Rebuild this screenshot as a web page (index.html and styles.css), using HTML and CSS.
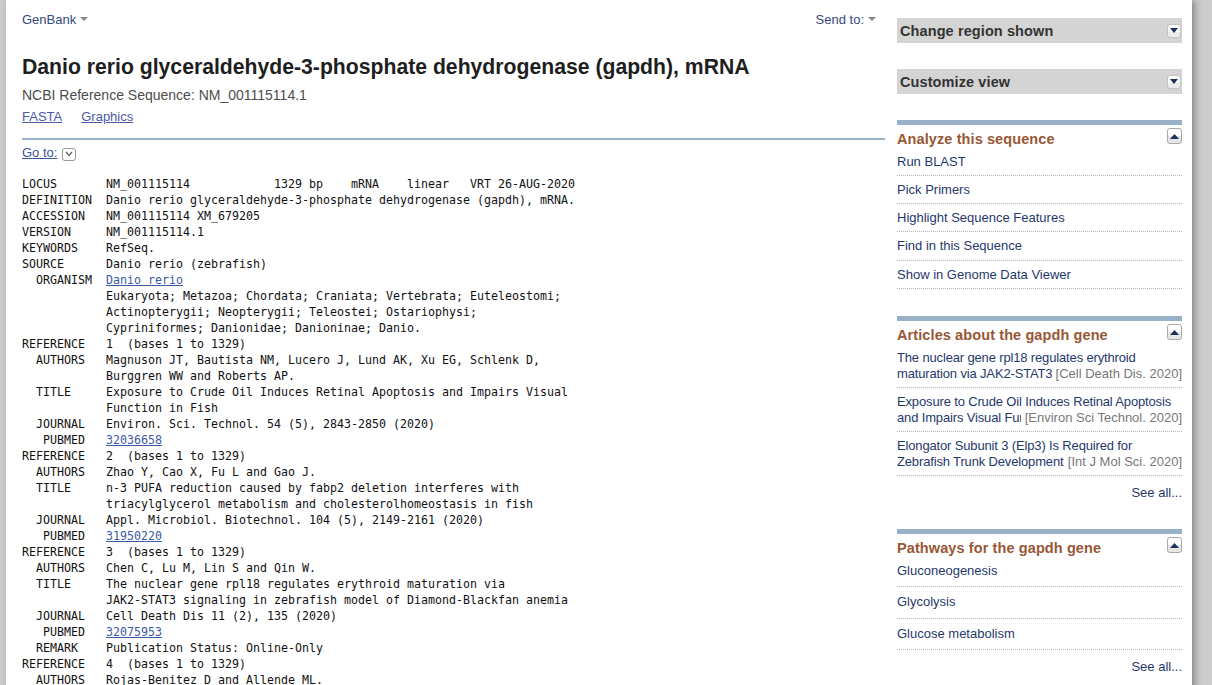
FILE: index.html
```html
<!DOCTYPE html>
<html lang="en">
<head>
<meta charset="utf-8">
<title>Danio rerio glyceraldehyde-3-phosphate dehydrogenase (gapdh), mRNA - Nucleotide - NCBI</title>
<link rel="stylesheet" href="styles.css">
</head>
<body>
<div class="page">
  <div class="main">
    <div class="topbar">
      <a class="menu" href="#">GenBank<span class="caret"></span></a>
      <a class="menu" href="#">Send to:<span class="caret"></span></a>
    </div>
    <h1 class="title">Danio rerio glyceraldehyde-3-phosphate dehydrogenase (gapdh), mRNA</h1>
    <p class="refseq">NCBI Reference Sequence: NM_001115114.1</p>
    <p class="formats"><a href="#">FASTA</a><a href="#">Graphics</a></p>
    <div class="rule"></div>
    <div class="goto"><a href="#">Go to:</a><span class="goto-btn"><svg width="8" height="6" viewBox="0 0 8 6"><path d="M1 1 L4 4.5 L7 1" fill="none" stroke="#666" stroke-width="1.3"/></svg></span></div>
<pre class="flat">LOCUS       NM_001115114            1329 bp    mRNA    linear   VRT 26-AUG-2020
DEFINITION  Danio rerio glyceraldehyde-3-phosphate dehydrogenase (gapdh), mRNA.
ACCESSION   NM_001115114 XM_679205
VERSION     NM_001115114.1
KEYWORDS    RefSeq.
SOURCE      Danio rerio (zebrafish)
  ORGANISM  <a href="#">Danio rerio</a>
            Eukaryota; Metazoa; Chordata; Craniata; Vertebrata; Euteleostomi;
            Actinopterygii; Neopterygii; Teleostei; Ostariophysi;
            Cypriniformes; Danionidae; Danioninae; Danio.
REFERENCE   1  (bases 1 to 1329)
  AUTHORS   Magnuson JT, Bautista NM, Lucero J, Lund AK, Xu EG, Schlenk D,
            Burggren WW and Roberts AP.
  TITLE     Exposure to Crude Oil Induces Retinal Apoptosis and Impairs Visual
            Function in Fish
  JOURNAL   Environ. Sci. Technol. 54 (5), 2843-2850 (2020)
   PUBMED   <a href="#">32036658</a>
REFERENCE   2  (bases 1 to 1329)
  AUTHORS   Zhao Y, Cao X, Fu L and Gao J.
  TITLE     n-3 PUFA reduction caused by fabp2 deletion interferes with
            triacylglycerol metabolism and cholesterolhomeostasis in fish
  JOURNAL   Appl. Microbiol. Biotechnol. 104 (5), 2149-2161 (2020)
   PUBMED   <a href="#">31950220</a>
REFERENCE   3  (bases 1 to 1329)
  AUTHORS   Chen C, Lu M, Lin S and Qin W.
  TITLE     The nuclear gene rpl18 regulates erythroid maturation via
            JAK2-STAT3 signaling in zebrafish model of Diamond-Blackfan anemia
  JOURNAL   Cell Death Dis 11 (2), 135 (2020)
   PUBMED   <a href="#">32075953</a>
  REMARK    Publication Status: Online-Only
REFERENCE   4  (bases 1 to 1329)
  AUTHORS   Rojas-Benitez D and Allende ML.
  TITLE     Elongator Subunit 3 (Elp3) Is Required for Zebrafish Trunk
            Development
</pre>
  </div>

  <div class="side">
    <div class="graybox">
      <span class="graybox-label">Change region shown</span>
      <span class="btn"><svg width="8" height="5" viewBox="0 0 8 5"><path d="M0 0 H8 L4 5 Z" fill="#1b3260"/></svg></span>
    </div>
    <div class="graybox">
      <span class="graybox-label">Customize view</span>
      <span class="btn"><svg width="8" height="5" viewBox="0 0 8 5"><path d="M0 0 H8 L4 5 Z" fill="#1b3260"/></svg></span>
    </div>

    <div class="portlet portlet-analyze">
      <h3 class="portlet-head">Analyze this sequence</h3>
      <span class="btn btn-up"><svg width="9" height="5" viewBox="0 0 9 5"><path d="M0 5 H9 L4.5 0 Z" fill="#1b3260"/></svg></span>
      <ul class="links">
        <li><a href="#">Run BLAST</a></li>
        <li><a href="#">Pick Primers</a></li>
        <li><a href="#">Highlight Sequence Features</a></li>
        <li><a href="#">Find in this Sequence</a></li>
        <li><a href="#">Show in Genome Data Viewer</a></li>
      </ul>
    </div>

    <div class="portlet portlet-articles">
      <h3 class="portlet-head">Articles about the gapdh gene</h3>
      <span class="btn btn-up"><svg width="9" height="5" viewBox="0 0 9 5"><path d="M0 5 H9 L4.5 0 Z" fill="#1b3260"/></svg></span>
      <ul class="links articles">
        <li><a class="art-title" href="#">The nuclear gene rpl18 regulates erythroid maturation via JAK2-STAT3 signaling in zebrafish model of Diamond-Blackfan anemia</a><span class="src">[Cell Death Dis. 2020]</span></li>
        <li><a class="art-title" href="#">Exposure to Crude Oil Induces Retinal Apoptosis and Impairs Visual Function in Fish</a><span class="src">[Environ Sci Technol. 2020]</span></li>
        <li><a class="art-title" href="#">Elongator Subunit 3 (Elp3) Is Required for Zebrafish Trunk Development</a><span class="src">[Int J Mol Sci. 2020]</span></li>
      </ul>
      <div class="seeall seeall-articles"><a href="#">See all...</a></div>
    </div>

    <div class="portlet portlet-path">
      <h3 class="portlet-head">Pathways for the gapdh gene</h3>
      <span class="btn btn-up"><svg width="9" height="5" viewBox="0 0 9 5"><path d="M0 5 H9 L4.5 0 Z" fill="#1b3260"/></svg></span>
      <ul class="links paths">
        <li><a href="#">Gluconeogenesis</a></li>
        <li><a href="#">Glycolysis</a></li>
        <li><a href="#">Glucose metabolism</a></li>
      </ul>
      <div class="seeall seeall-path"><a href="#">See all...</a></div>
    </div>
  </div>
</div>
</body>
</html>
```

FILE: styles.css
```css
html, body {
  margin: 0;
  padding: 0;
  height: 100%;
  overflow: hidden;
}
body {
  background: #cccccc;
  font-family: "Liberation Sans", Arial, sans-serif;
  font-size: 13px;
  color: #222;
}
a { text-decoration: none; }

.page {
  margin-left: 6px;
  width: 1186px;
  min-height: 100%;
  background: #fff;
  box-shadow: 3px 0 7px rgba(0, 0, 0, 0.35);
  display: flex;
  gap: 12px;
  padding: 0 10px 0 16px;
  box-sizing: border-box;
}

/* ---------- main column ---------- */
.main {
  flex: 1;
  min-width: 0;
}
.topbar {
  display: flex;
  justify-content: space-between;
  padding-top: 12px;
  padding-right: 9px;
  line-height: 16px;
}
.menu {
  color: #34497e;
  font-size: 13px;
}
.caret {
  display: inline-block;
  margin-left: 4px;
  vertical-align: 3px;
  border-left: 4px solid transparent;
  border-right: 4px solid transparent;
  border-top: 4px solid #888;
}
.title {
  margin: 27px 0 0;
  font-size: 21.2px;
  line-height: 24px;
  font-weight: bold;
  color: #1e1e1e;
}
.refseq {
  margin: 7px 0 0;
  font-size: 14px;
  line-height: 18px;
  color: #4d4d4d;
}
.formats {
  margin: 5px 0 0;
  line-height: 16px;
  display: flex;
  gap: 19px;
}
.formats a {
  color: #4c5aa6;
  text-decoration: underline;
}
.rule {
  margin-top: 13px;
  height: 2px;
  background: #98b0c8;
}
.goto {
  margin-top: 5px;
  line-height: 16px;
  display: flex;
  align-items: center;
  gap: 5px;
}
.goto a {
  color: #3c519e;
  text-decoration: underline;
}
.goto-btn {
  width: 12px;
  height: 11px;
  border: 1px solid #999;
  border-radius: 3px;
  display: flex;
  align-items: center;
  justify-content: center;
  margin-top: 2px;
}
.flat {
  margin: 15px 0 0;
  font-family: "DejaVu Sans Mono", "Liberation Mono", monospace;
  font-size: 11.63px;
  line-height: 16px;
  color: #111;
}
.flat a {
  color: #3a5aa6;
  text-decoration: underline;
}

/* ---------- side column ---------- */
.side {
  width: 285px;
  flex: none;
  padding-top: 18px;
}
.graybox {
  height: 25px;
  background: #d4d4d4;
  display: flex;
  align-items: center;
  justify-content: space-between;
  padding: 0 1px 0 3px;
  margin-bottom: 26px;
}
.graybox-label {
  font-size: 14.5px;
  font-weight: bold;
  color: #333;
  letter-spacing: 0.1px;
}
.btn {
  width: 12px;
  height: 12px;
  border: 1px solid #c2c2c2;
  border-radius: 3px;
  background: linear-gradient(#ffffff 55%, #ebebeb 55%);
  display: flex;
  align-items: center;
  justify-content: center;
}
.portlet {
  position: relative;
  border-top: 5px solid #98b0c8;
}
.portlet-analyze { margin-bottom: 27px; }
.portlet-articles { margin-bottom: 28px; }
.btn-up {
  position: absolute;
  top: 3px;
  right: 0;
  width: 13px;
  height: 14px;
  border-color: #aaa;
  background: linear-gradient(#ffffff 50%, #e6e6e6 50%);
}
.portlet-head {
  margin: 5px 0 0;
  font-size: 14.5px;
  line-height: 18px;
  font-weight: bold;
  color: #985735;
  letter-spacing: 0.1px;
}
.links {
  list-style: none;
  margin: 0;
  padding: 0;
}
.links li {
  padding: 6px 0 5px;
  line-height: 16px;
  border-bottom: 1px dotted #b8b8b8;
}
.links li:nth-child(4) {
  padding-bottom: 6px;
}
.links a {
  color: #1f396b;
}
.articles li {
  position: relative;
  padding: 6px 0 5px;
}
.articles li:nth-child(4) {
  padding-bottom: 5px;
}
.art-title {
  display: block;
  max-height: 32px;
  overflow: hidden;
  letter-spacing: -0.15px;
}
.src {
  position: absolute;
  right: 0;
  bottom: 5px;
  background: #fff;
  padding-left: 4px;
  color: #777;
}
.paths li {
  padding: 7px 0 7px;
}
.paths li:first-child {
  padding-top: 6px;
  padding-bottom: 7px;
}
.paths li:nth-child(2) {
  padding-bottom: 8px;
}
.seeall {
  text-align: right;
  line-height: 16px;
}
.seeall-articles { padding-top: 9px; }
.seeall-path { padding-top: 9px; }
.seeall a {
  color: #1f396b;
}
```
